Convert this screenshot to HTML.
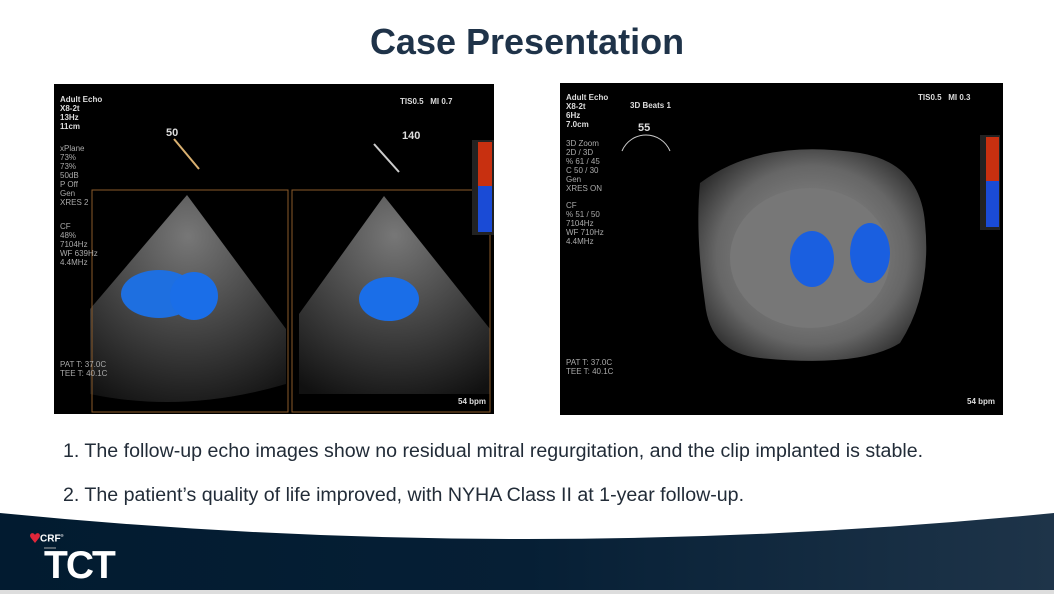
<!DOCTYPE html>
<html><head><meta charset="utf-8"><style>
*{margin:0;padding:0;box-sizing:border-box}
body{width:1054px;height:594px;overflow:hidden;background:#fff;font-family:"Liberation Sans",sans-serif;position:relative}
h1{position:absolute;top:21px;left:0;width:1054px;text-align:center;font-size:36px;font-weight:bold;color:#1f3349}
.img{position:absolute;background:#000;overflow:hidden}
.t{position:absolute;color:#ddd;font-size:8px;line-height:9px;font-weight:bold}
.p{position:absolute;left:63px;font-size:19.6px;color:#222c38}
</style></head><body>
<h1>Case Presentation</h1>

<div class="img" style="left:54px;top:84px;width:440px;height:330px">
<svg width="440" height="330" style="position:absolute;left:0;top:0">
<defs>
<radialGradient id="g1" cx="0.5" cy="0.2" r="0.9"><stop offset="0" stop-color="#777"/><stop offset="0.6" stop-color="#3a3a3a"/><stop offset="1" stop-color="#111"/></radialGradient>
</defs>
<path d="M133,111 L36,225 L36,310 Q130,330 232,300 L232,245 Z" fill="url(#g1)"/>
<path d="M330,112 L245,230 L245,310 L436,310 L436,245 Z" fill="url(#g1)"/>
<ellipse cx="105" cy="210" rx="38" ry="24" fill="#1e6fe0"/>
<ellipse cx="140" cy="212" rx="24" ry="24" fill="#1a6ee8"/>
<ellipse cx="335" cy="215" rx="30" ry="22" fill="#1a6ee8"/>
<rect x="38" y="106" width="196" height="222" fill="none" stroke="#8a5a2a"/>
<rect x="238" y="106" width="198" height="222" fill="none" stroke="#8a5a2a"/>
<rect x="418" y="56" width="22" height="95" fill="#222"/>
<rect x="424" y="58" width="14" height="44" fill="#c83010"/>
<rect x="424" y="102" width="14" height="46" fill="#1a4bd6"/>
<line x1="120" y1="55" x2="145" y2="85" stroke="#d9b070" stroke-width="2"/>
<line x1="320" y1="60" x2="345" y2="88" stroke="#ccc" stroke-width="2"/>
</svg>
<div class="t" style="left:6px;top:11px">Adult Echo<br>X8-2t<br>13Hz<br>11cm</div>
<div class="t" style="left:112px;top:45px;font-size:11px">50</div>
<div class="t" style="left:348px;top:48px;font-size:11px">140</div>
<div class="t" style="left:346px;top:13px">TIS0.5 &nbsp; MI 0.7</div>
<div class="t" style="left:6px;top:60px;font-weight:normal;color:#aaa">xPlane<br>73%<br>73%<br>50dB<br>P Off<br>Gen<br>XRES 2</div>
<div class="t" style="left:6px;top:138px;font-weight:normal;color:#aaa">CF<br>48%<br>7104Hz<br>WF 639Hz<br>4.4MHz</div>
<div class="t" style="left:6px;top:276px;font-weight:normal;color:#aaa">PAT T: 37.0C<br>TEE T: 40.1C</div>
<div class="t" style="left:404px;top:313px">54 bpm</div>
</div>

<div class="img" style="left:560px;top:83px;width:443px;height:332px">
<svg width="443" height="332" style="position:absolute;left:0;top:0">
<defs><radialGradient id="g2" cx="0.5" cy="0.5" r="0.6"><stop offset="0" stop-color="#9a9a9a"/><stop offset="0.7" stop-color="#666"/><stop offset="1" stop-color="#2a2a2a"/></radialGradient></defs>
<path d="M140,100 Q200,55 300,70 Q360,80 365,140 Q372,210 340,260 Q300,285 200,275 Q150,270 145,220 Q135,150 140,100 Z" fill="url(#g2)"/>
<ellipse cx="250" cy="175" rx="80" ry="70" fill="#777"/>
<ellipse cx="252" cy="176" rx="22" ry="28" fill="#1a5fe0"/>
<ellipse cx="310" cy="170" rx="20" ry="30" fill="#1a5fe0"/>
<rect x="420" y="52" width="20" height="95" fill="#222"/>
<rect x="426" y="54" width="13" height="44" fill="#c83010"/>
<rect x="426" y="98" width="13" height="46" fill="#1a4bd6"/>
<path d="M62,68 A26,26 0 0 1 110,68" fill="none" stroke="#ccc"/>
</svg>
<div class="t" style="left:6px;top:10px">Adult Echo<br>X8-2t<br>6Hz<br>7.0cm</div>
<div class="t" style="left:70px;top:18px">3D Beats 1</div>
<div class="t" style="left:78px;top:41px;font-size:11px">55</div>
<div class="t" style="left:358px;top:10px">TIS0.5 &nbsp; MI 0.3</div>
<div class="t" style="left:6px;top:56px;font-weight:normal;color:#aaa">3D Zoom<br>2D / 3D<br>% 61 / 45<br>C 50 / 30<br>Gen<br>XRES ON</div>
<div class="t" style="left:6px;top:118px;font-weight:normal;color:#aaa">CF<br>% 51 / 50<br>7104Hz<br>WF 710Hz<br>4.4MHz</div>
<div class="t" style="left:6px;top:275px;font-weight:normal;color:#aaa">PAT T: 37.0C<br>TEE T: 40.1C</div>
<div class="t" style="left:407px;top:314px">54 bpm</div>
</div>

<div class="p" style="top:440px">1. The follow-up echo images show no residual mitral regurgitation, and the clip implanted is stable.</div>
<div class="p" style="top:484px">2. The patient’s quality of life improved, with NYHA Class II at 1-year follow-up.</div>

<svg width="1054" height="594" style="position:absolute;left:0;top:0">
<defs><linearGradient id="f" x1="0" x2="1"><stop offset="0" stop-color="#021b30"/><stop offset="0.5" stop-color="#061f35"/><stop offset="1" stop-color="#1e3449"/></linearGradient></defs>
<path d="M0,513 Q527,565 1054,513 L1054,594 L0,594 Z" fill="url(#f)"/>
<rect x="0" y="590" width="1054" height="4" fill="#ddd"/>
<path d="M31,538 c-3,-4 2,-7 4,-3 c2,-4 7,-1 4,3 l-4,5 z" fill="#e0263a"/>
<line x1="44" y1="548" x2="56" y2="548" stroke="#aaa"/>
<line x1="22" y1="548" x2="56" y2="548" stroke="#aaa" opacity="0"/>
</svg>
<div style="position:absolute;left:40px;top:533px;color:#fff;font-size:10px;font-weight:bold">CRF<sup style="font-size:4px">®</sup></div>
<div style="position:absolute;left:44px;top:546px;color:#fff;font-size:39px;font-weight:bold;letter-spacing:-2px;line-height:40px">TCT</div>
</body></html>
